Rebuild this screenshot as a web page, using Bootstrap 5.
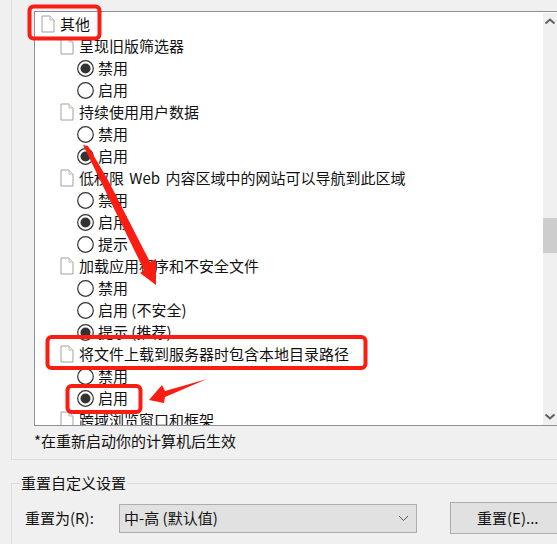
<!DOCTYPE html>
<html lang="zh"><head><meta charset="utf-8">
<link href="https://cdn.jsdelivr.net/npm/bootstrap@5.3.0/dist/css/bootstrap.min.css" rel="stylesheet">
<style>
html,body{height:100%;margin:0;overflow:hidden}
body{background:#f0f0f0;font-family:"Noto Sans CJK SC","Liberation Sans",sans-serif;font-size:15px;color:#111;line-height:22px;position:relative}
.sec-top{margin-left:11px;height:460px;border-left:1px solid #dcdcdc;border-bottom:1px solid #dcdcdc;padding:11px 0 0 22px}
.tree-box{height:415px;background:#fff;border-left:1px solid #8f8f97;border-top:1px solid #8f8f97;border-bottom:1px solid #8f8f97;overflow:hidden;padding-top:1px}
.tree-list{flex:1;min-width:0}
.tree-row{height:22px;white-space:nowrap}
.lv0{padding-left:6px}.lv1{padding-left:25px}.lv2{padding-left:42px}
.doc-ic{width:14px;height:18px;flex:none}
.rad-ic{width:17px;height:17px;flex:none}
.doc-txt{margin-left:5px;word-spacing:2px}
.sb{width:14px;background:#f0f0f0;flex:none}
.sb-arrow{width:14px;height:17px;flex:none}
.sb-space{height:188px}
.sb-thumb{height:35px;background:#cdcdcd}
.note{margin-top:4px}
.reset-sec{margin:23px 0 0 11px;border-left:1px solid #dcdcdc;border-top:1px solid #dcdcdc;height:70px;padding-left:13px}
.reset-title{margin:-13px 0 0 -5px;background:#f0f0f0;width:max-content;padding:0 1px;line-height:24px;position:relative}
.reset-row{margin-top:7px}
.reset-lab{width:94px;flex:none}
.fake-sel{width:298px;height:29px;background:#e1e1e1;border:1px solid #adadad;padding:0 7px 0 4px;flex:none}
.fake-btn{width:107px;height:32px;background:#e1e1e1;border:1px solid #adadad;border-right:0;margin-left:33px;flex:none;padding:0 0 0 26px;font-size:15px;line-height:22px;border-radius:0;color:#111;text-align:left}
.overlay{position:absolute;left:0;top:0;width:557px;height:544px;pointer-events:none}
</style></head>
<body>
<svg width="0" height="0" class="d-block position-absolute"><defs>
<symbol id="doc" viewBox="0 0 14 18"><path d="M1 1H9L13 5V17H1Z" fill="#fff" stroke="#a0a0a0"/><path d="M9 1V5H13" fill="#efefef" stroke="#bdbdbd"/></symbol>
<symbol id="rOn" viewBox="0 0 17 17"><circle cx="8.500" cy="8.500" r="7.800" fill="#fff" stroke="#333" stroke-width="1.200"/><circle cx="8.500" cy="8.500" r="5" fill="#333"/></symbol>
<symbol id="rOff" viewBox="0 0 17 17"><circle cx="8.500" cy="8.500" r="7.800" fill="#fff" stroke="#333" stroke-width="1.200"/></symbol>
</defs></svg>
<div class="sec-top">
<div class="tree-box d-flex">
<div class="tree-list">
<div class="tree-row lv0 d-flex align-items-center"><svg class="doc-ic"><use href="#doc"/></svg><span class="doc-txt">其他</span></div>
<div class="tree-row lv1 d-flex align-items-center"><svg class="doc-ic"><use href="#doc"/></svg><span class="doc-txt">呈现旧版筛选器</span></div>
<div class="tree-row lv2 d-flex align-items-center gap-1"><svg class="rad-ic"><use href="#rOn"/></svg>禁用</div>
<div class="tree-row lv2 d-flex align-items-center gap-1"><svg class="rad-ic"><use href="#rOff"/></svg>启用</div>
<div class="tree-row lv1 d-flex align-items-center"><svg class="doc-ic"><use href="#doc"/></svg><span class="doc-txt">持续使用用户数据</span></div>
<div class="tree-row lv2 d-flex align-items-center gap-1"><svg class="rad-ic"><use href="#rOff"/></svg>禁用</div>
<div class="tree-row lv2 d-flex align-items-center gap-1"><svg class="rad-ic"><use href="#rOn"/></svg>启用</div>
<div class="tree-row lv1 d-flex align-items-center"><svg class="doc-ic"><use href="#doc"/></svg><span class="doc-txt">低权限 Web 内容区域中的网站可以导航到此区域</span></div>
<div class="tree-row lv2 d-flex align-items-center gap-1"><svg class="rad-ic"><use href="#rOff"/></svg>禁用</div>
<div class="tree-row lv2 d-flex align-items-center gap-1"><svg class="rad-ic"><use href="#rOn"/></svg>启用</div>
<div class="tree-row lv2 d-flex align-items-center gap-1"><svg class="rad-ic"><use href="#rOff"/></svg>提示</div>
<div class="tree-row lv1 d-flex align-items-center"><svg class="doc-ic"><use href="#doc"/></svg><span class="doc-txt">加载应用程序和不安全文件</span></div>
<div class="tree-row lv2 d-flex align-items-center gap-1"><svg class="rad-ic"><use href="#rOff"/></svg>禁用</div>
<div class="tree-row lv2 d-flex align-items-center gap-1"><svg class="rad-ic"><use href="#rOff"/></svg>启用 (不安全)</div>
<div class="tree-row lv2 d-flex align-items-center gap-1"><svg class="rad-ic"><use href="#rOn"/></svg>提示 (推荐)</div>
<div class="tree-row lv1 d-flex align-items-center"><svg class="doc-ic"><use href="#doc"/></svg><span class="doc-txt">将文件上载到服务器时包含本地目录路径</span></div>
<div class="tree-row lv2 d-flex align-items-center gap-1"><svg class="rad-ic"><use href="#rOff"/></svg>禁用</div>
<div class="tree-row lv2 d-flex align-items-center gap-1"><svg class="rad-ic"><use href="#rOn"/></svg>启用</div>
<div class="tree-row lv1 d-flex align-items-center"><svg class="doc-ic"><use href="#doc"/></svg><span class="doc-txt">跨域浏览窗口和框架</span></div>
</div>
<div class="sb d-flex flex-column">
<svg class="sb-arrow" viewBox="0 0 14 17"><path d="M2.500 10.500L7 6.500L11.500 10.500" fill="none" stroke="#606060" stroke-width="2"/></svg>
<div class="sb-space"></div>
<div class="sb-thumb"></div>
<div class="flex-grow-1"></div>
<svg class="sb-arrow" viewBox="0 0 14 17"><path d="M2.500 6.500L7 10.500L11.500 6.500" fill="none" stroke="#606060" stroke-width="2"/></svg>
</div>
</div>
<div class="note">*在重新启动你的计算机后生效</div>
</div>
<div class="reset-sec">
<div class="reset-title">重置自定义设置</div>
<div class="reset-row d-flex align-items-center">
<div class="reset-lab">重置为(R):</div>
<div class="fake-sel d-flex align-items-center justify-content-between"><span>中-高 (默认值)</span>
<svg width="11" height="7" viewBox="0 0 11 7"><path d="M1 1L5.500 5.500L10 1" fill="none" stroke="#555" stroke-width="1"/></svg></div>
<button type="button" class="btn fake-btn text-nowrap">重置(E)...</button>
</div>
</div>
<svg class="overlay" viewBox="0 0 557 544">
<g fill="none" stroke="#fb1c12" stroke-width="4">
<rect x="29.500" y="6.500" width="70" height="32" rx="4"/>
<rect x="47.500" y="337" width="318" height="31" rx="4"/>
<rect x="67.500" y="386" width="73" height="26" rx="4"/>
</g>
<path d="M83 145L88 146L108 180L150 262L156 259L156 285L140 273L144 270Z" fill="#fb1c12"/>
<path d="M207 379L165 391L162 385L149 400L164 403L165 397Z" fill="#fb1c12"/>
</svg>
</body></html>
